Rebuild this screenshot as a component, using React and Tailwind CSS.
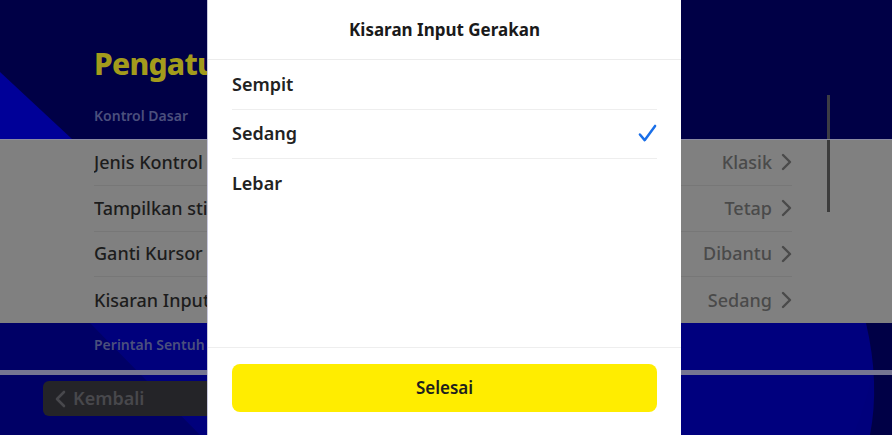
const rows = [
  { label: "Jenis Kontrol", value: "Klasik" },
  { label: "Tampilkan stik", value: "Tetap" },
  { label: "Ganti Kursor", value: "Dibantu" },
  { label: "Kisaran Input Gerakan", value: "Sedang" },
];

const options = ["Sempit", "Sedang", "Lebar"];

const Chevron = ({ className }) => (
  <svg viewBox="0 0 12 20" className={className} fill="none" stroke="currentColor" strokeWidth="2.4" strokeLinecap="round" strokeLinejoin="round">
    <path d="M3 3l7 7-7 7" />
  </svg>
);

const App = () => {
  return (
    <div
      className="relative w-[892px] h-[435px] overflow-hidden bg-[#000046]"
      style={{ fontFamily: '"Noto Sans", "Open Sans", sans-serif' }}
    >
      {/* settings screen behind the dialog (already dimmed) */}
      <div className="relative h-[139px] bg-[#000046]">
        <svg className="absolute inset-0" width="892" height="139">
          <polygon points="0,72 0,139 72,139" fill="#000098" />
        </svg>
        <div className="relative pl-[94px] pt-[44px]">
          <div className="w-[113px] overflow-hidden whitespace-nowrap">
            <h1 className="text-[30px] leading-[40px] font-extrabold tracking-tight text-[#a39b1c]">
              Pengaturan Kontrol
            </h1>
          </div>
          <p className="mt-[22px] text-[14px] leading-[20px] font-semibold text-[#4b4f7d]">Kontrol Dasar</p>
        </div>
        <div className="absolute left-[827px] top-[95px] w-[3px] h-[44px] bg-[#3c3c44]" />
      </div>

      <div className="relative h-[184px] bg-[#808080] border-t border-[#8a8aa0] px-[94px] pr-[100px] flex flex-col justify-center">
        <div className="absolute left-[827px] top-0 w-[3px] h-[72px] bg-[#3c3c3c]" />
        {rows.map((r, i) => (
          <div
            key={r.label}
            className={`flex items-center justify-between h-[46px] ${i < rows.length - 1 ? "border-b border-[#777777]" : ""}`}
          >
            <span className="w-[113px] overflow-hidden whitespace-nowrap text-[18px] font-medium text-[#1c1c1c]">{r.label}</span>
            <span className="flex items-center gap-[8px] text-[18px] font-medium text-[#4a4a4a]">
              {r.value}
              <Chevron className="w-[12px] h-[20px]" />
            </span>
          </div>
        ))}
      </div>

      <div className="relative h-[112px] bg-[#000066]">
        <svg className="absolute inset-0" width="892" height="112">
          <polygon points="90,0 892,0 892,112 200,112" fill="#00007c" />
          <circle cx="540" cy="-20" r="340" fill="#00007e" />
          <path d="M866 0 Q 880 60 870 112 L892 112 L892 0 Z" fill="#000046" />
        </svg>
        <div className="relative pl-[94px] pt-[12px] text-[14px] leading-[20px] font-semibold text-[#4b4f7d]">
          Perintah Sentuh
        </div>
        <div className="absolute left-0 right-0 top-[47px] h-[5px] bg-[#767692]" />
        <div className="absolute left-[43px] top-[58px] w-[200px] h-[35px] rounded-[6px] bg-[#242428] flex items-center pl-[12px] gap-[6px] text-[#48484c]">
          <svg viewBox="0 0 12 20" className="w-[12px] h-[20px]" fill="none" stroke="currentColor" strokeWidth="2.6" strokeLinecap="round" strokeLinejoin="round">
            <path d="M9 3l-7 7 7 7" />
          </svg>
          <span className="text-[18px] font-semibold">Kembali</span>
        </div>
      </div>

      {/* dialog */}
      <div className="absolute top-0 left-[207px] w-[474px] h-full bg-white border-l border-[#c8c8dc] flex flex-col">
        <div className="h-[60px] flex items-center justify-center border-b border-[#ececec]">
          <h2 className="text-[17px] font-bold text-[#1a1a1a]">Kisaran Input Gerakan</h2>
        </div>
        <div className="flex-1 px-[24px]">
          {options.map((o, i) => (
            <div
              key={o}
              className={`flex items-center justify-between h-[49.5px] ${i < options.length - 1 ? "border-b border-[#eeeeee]" : ""}`}
            >
              <span className="text-[18px] font-semibold text-[#222222]">{o}</span>
              {o === "Sedang" && (
                <svg viewBox="0 0 20 20" className="w-[19px] h-[19px]" fill="none" stroke="#1a6fe8" strokeWidth="2.6" strokeLinecap="round" strokeLinejoin="round">
                  <path d="M2 11l5 6L18 2" />
                </svg>
              )}
            </div>
          ))}
        </div>
        <div className="border-t border-[#eeeeee] px-[24px] pt-[16px] pb-[23px]">
          <button className="w-full h-[48px] rounded-[8px] bg-[#ffed00] text-[17px] font-semibold text-[#1e1e1e]">
            Selesai
          </button>
        </div>
      </div>
    </div>
  );
};

export default App;
